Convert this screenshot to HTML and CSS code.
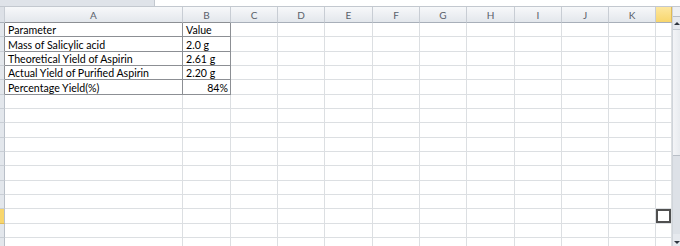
FILE: index.html
```html
<!DOCTYPE html>
<html>
<head>
<meta charset="utf-8">
<link rel="stylesheet" href="styles.css">
</head>
<body>
<div class="top"><div class="top-left"></div><div class="top-right"></div></div>
<div class="sheet">
  <div class="grid">
    <div class="c h corner"></div><div class="c h hb">A</div><div class="c h hb">B</div><div class="c h">C</div><div class="c h">D</div><div class="c h">E</div><div class="c h">F</div><div class="c h">G</div><div class="c h">H</div><div class="c h">I</div><div class="c h">J</div><div class="c h">K</div><div class="c h hsel"></div>

    <div class="c rh rhb"></div><div class="c b">Parameter</div><div class="c b">Value</div><div class="c"></div><div class="c"></div><div class="c"></div><div class="c"></div><div class="c"></div><div class="c"></div><div class="c"></div><div class="c"></div><div class="c"></div><div class="c"></div>
    <div class="c rh rhb"></div><div class="c b">Mass of Salicylic acid</div><div class="c b">2.0 g</div><div class="c"></div><div class="c"></div><div class="c"></div><div class="c"></div><div class="c"></div><div class="c"></div><div class="c"></div><div class="c"></div><div class="c"></div><div class="c"></div>
    <div class="c rh rhb"></div><div class="c b">Theoretical Yield of Aspirin</div><div class="c b">2.61 g</div><div class="c"></div><div class="c"></div><div class="c"></div><div class="c"></div><div class="c"></div><div class="c"></div><div class="c"></div><div class="c"></div><div class="c"></div><div class="c"></div>
    <div class="c rh rhb"></div><div class="c b">Actual Yield of Purified Aspirin</div><div class="c b">2.20 g</div><div class="c"></div><div class="c"></div><div class="c"></div><div class="c"></div><div class="c"></div><div class="c"></div><div class="c"></div><div class="c"></div><div class="c"></div><div class="c"></div>
    <div class="c rh rhb"></div><div class="c b">Percentage Yield(%)</div><div class="c b num">84%</div><div class="c"></div><div class="c"></div><div class="c"></div><div class="c"></div><div class="c"></div><div class="c"></div><div class="c"></div><div class="c"></div><div class="c"></div><div class="c"></div>
    <div class="c rh"></div><div class="c"></div><div class="c"></div><div class="c"></div><div class="c"></div><div class="c"></div><div class="c"></div><div class="c"></div><div class="c"></div><div class="c"></div><div class="c"></div><div class="c"></div><div class="c"></div>
    <div class="c rh"></div><div class="c"></div><div class="c"></div><div class="c"></div><div class="c"></div><div class="c"></div><div class="c"></div><div class="c"></div><div class="c"></div><div class="c"></div><div class="c"></div><div class="c"></div><div class="c"></div>
    <div class="c rh"></div><div class="c"></div><div class="c"></div><div class="c"></div><div class="c"></div><div class="c"></div><div class="c"></div><div class="c"></div><div class="c"></div><div class="c"></div><div class="c"></div><div class="c"></div><div class="c"></div>
    <div class="c rh"></div><div class="c"></div><div class="c"></div><div class="c"></div><div class="c"></div><div class="c"></div><div class="c"></div><div class="c"></div><div class="c"></div><div class="c"></div><div class="c"></div><div class="c"></div><div class="c"></div>
    <div class="c rh"></div><div class="c"></div><div class="c"></div><div class="c"></div><div class="c"></div><div class="c"></div><div class="c"></div><div class="c"></div><div class="c"></div><div class="c"></div><div class="c"></div><div class="c"></div><div class="c"></div>
    <div class="c rh"></div><div class="c"></div><div class="c"></div><div class="c"></div><div class="c"></div><div class="c"></div><div class="c"></div><div class="c"></div><div class="c"></div><div class="c"></div><div class="c"></div><div class="c"></div><div class="c"></div>
    <div class="c rh"></div><div class="c"></div><div class="c"></div><div class="c"></div><div class="c"></div><div class="c"></div><div class="c"></div><div class="c"></div><div class="c"></div><div class="c"></div><div class="c"></div><div class="c"></div><div class="c"></div>
    <div class="c rh"></div><div class="c"></div><div class="c"></div><div class="c"></div><div class="c"></div><div class="c"></div><div class="c"></div><div class="c"></div><div class="c"></div><div class="c"></div><div class="c"></div><div class="c"></div><div class="c"></div>
    <div class="c rh rhsel"></div><div class="c"></div><div class="c"></div><div class="c"></div><div class="c"></div><div class="c"></div><div class="c"></div><div class="c"></div><div class="c"></div><div class="c"></div><div class="c"></div><div class="c"></div><div class="c sel"></div>
    <div class="c rh"></div><div class="c"></div><div class="c"></div><div class="c"></div><div class="c"></div><div class="c"></div><div class="c"></div><div class="c"></div><div class="c"></div><div class="c"></div><div class="c"></div><div class="c"></div><div class="c"></div>
    <div class="c rh"></div><div class="c"></div><div class="c"></div><div class="c"></div><div class="c"></div><div class="c"></div><div class="c"></div><div class="c"></div><div class="c"></div><div class="c"></div><div class="c"></div><div class="c"></div><div class="c"></div>
  </div>
  <div class="vscroll">
    <div class="split"></div>
    <div class="arrow up"></div>
    <div class="thumb"></div>
    <div class="track"></div>
    <div class="arrow down"></div>
  </div>
</div>
</body>
</html>
```
FILE: styles.css
```css
html, body {
  margin: 0;
  padding: 0;
  background: #ffffff;
  overflow: hidden;
}
body {
  width: 680px;
  height: 246px;
  font-family: Lato, "Liberation Sans", sans-serif;
}
.top {
  display: flex;
  height: 6px;
  border-bottom: 1px solid #c3c8cf;
}
.top-left {
  width: 154px;
  background: #dfe3e9;
  border-right: 1px solid #c3c8cf;
}
.top-right {
  flex: 1;
  background: #ffffff;
}
.sheet {
  display: flex;
  height: 239px;
}
.grid {
  display: grid;
  grid-template-columns: 5px 178px 48px 47px 47px 48px 47px 47px 48px 47px 47px 47px 16px;
  grid-template-rows: 16px;
  grid-auto-rows: 14.333px;
  width: 672px;
  overflow: hidden;
}
.c {
  box-sizing: border-box;
  border-right: 1px solid #dcdfe2;
  border-bottom: 1px solid #dcdfe2;
  display: flex;
  align-items: flex-end;
  padding: 0 2px 0 3px;
  font-size: 10.6px;
  line-height: 12px;
  color: #000;
  white-space: nowrap;
  overflow: hidden;
}
.h {
  background: linear-gradient(#f7f8fa, #e3e7ec);
  border-right: 1px solid #c8cdd4;
  border-bottom: 1px solid #a8afb9;
  justify-content: center;
  align-items: center;
  color: #59606a;
  font-size: 10px;
  padding: 0;
}
.corner {
  background: #dde1e7;
}
.hb {
  border-bottom-color: #8c8f94;
}
.hsel {
  background: linear-gradient(#fde7a0, #f8d66c);
  border-right-color: #e0bb58;
}
.rh {
  background: #e3e7ec;
  border-right: 1px solid #b9bfc8;
  border-bottom: 1px solid #c9ced5;
  padding: 0;
}
.rhb {
  border-right-color: #8c8f94;
}
.rhsel {
  background: #f8d66c;
  border-bottom-color: #e0bb58;
}
.b {
  border-right-color: #8c8f94;
  border-bottom-color: #8c8f94;
}
.num {
  justify-content: flex-end;
}
.sel {
  box-shadow: inset 0 0 0 2px #505050;
}
.vscroll {
  width: 8px;
  display: flex;
  flex-direction: column;
  background: #e6e9ee;
  border-left: 1px solid #cfd4da;
  box-sizing: border-box;
}
.split {
  height: 9px;
  background: #eef0f3;
  border-bottom: 1px solid #b8bec6;
}
.arrow {
  height: 12px;
  position: relative;
}
.arrow.up::after,
.arrow.down::after {
  content: "";
  position: absolute;
  left: 1px;
  border-left: 3px solid transparent;
  border-right: 3px solid transparent;
}
.arrow.up::after {
  top: 5px;
  border-bottom: 3px solid #2f3640;
}
.arrow.down::after {
  bottom: 2px;
  border-top: 3px solid #2f3640;
}
.thumb {
  height: 125px;
  background: linear-gradient(90deg, #f3f4f7, #e8ebef);
  border-top: 1px solid #c6ccd3;
  border-bottom: 1px solid #b8bec6;
}
.track {
  flex: 1;
  background: #dde1e7;
}
```
